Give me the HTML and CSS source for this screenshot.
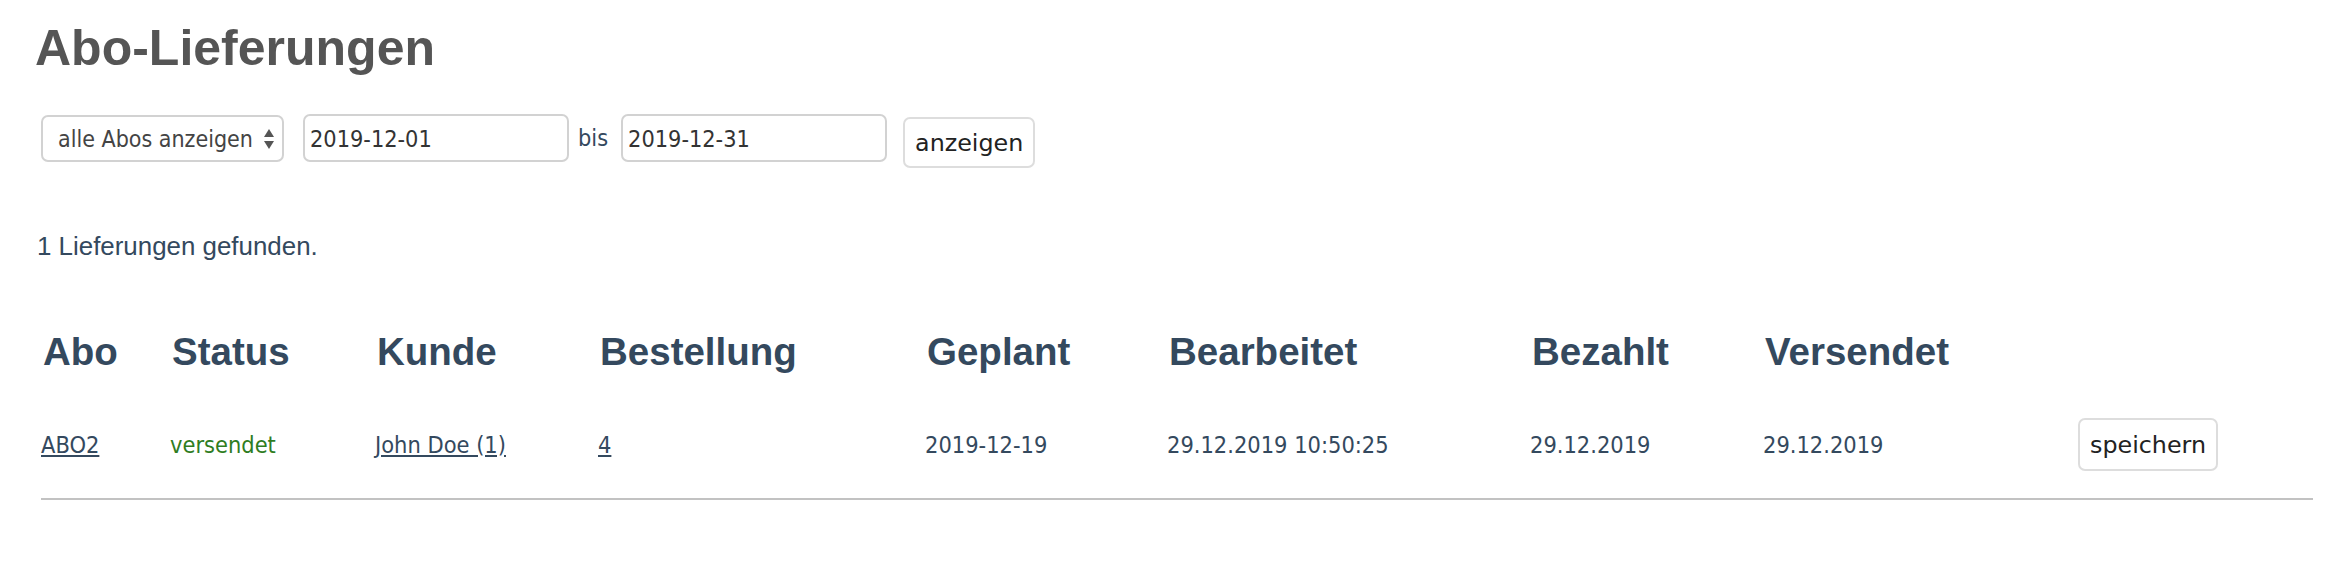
FILE: index.html
```html
<!DOCTYPE html>
<html lang="de">
<head>
<meta charset="utf-8">
<title>Abo-Lieferungen</title>
<link rel="stylesheet" href="styles.css">
</head>
<body>
<div class="page">
  <h1 class="title">Abo-Lieferungen</h1>
  <form class="filter">
    <span class="select-wrap">
      <select class="select">
        <option>alle Abos anzeigen</option>
      </select>
      <svg class="select-arrows" width="12" height="22" viewBox="0 0 12 22" aria-hidden="true">
        <path d="M6 1 L11 9 L1 9 Z" fill="#555"/>
        <path d="M1 13 L11 13 L6 21 Z" fill="#555"/>
      </svg>
    </span>
    <input class="date" type="text" value="2019-12-01">
    <span class="bis">bis</span>
    <input class="date" type="text" value="2019-12-31">
    <button type="button" class="btn btn-show">anzeigen</button>
  </form>
  <p class="count">1 Lieferungen gefunden.</p>
  <table class="deliveries">
    <colgroup>
      <col class="c-abo"><col class="c-status"><col class="c-kunde"><col class="c-best">
      <col class="c-geplant"><col class="c-bearb"><col class="c-bez"><col class="c-vers"><col class="c-act">
    </colgroup>
    <thead>
      <tr>
        <th>Abo</th><th>Status</th><th>Kunde</th><th>Bestellung</th>
        <th>Geplant</th><th>Bearbeitet</th><th>Bezahlt</th><th>Versendet</th><th></th>
      </tr>
    </thead>
    <tbody>
      <tr>
        <td><a href="#">ABO2</a></td>
        <td class="ok">versendet</td>
        <td><a href="#">John Doe (1)</a></td>
        <td><a href="#">4</a></td>
        <td>2019-12-19</td>
        <td>29.12.2019 10:50:25</td>
        <td>29.12.2019</td>
        <td>29.12.2019</td>
        <td><button type="button" class="btn btn-save">speichern</button></td>
      </tr>
    </tbody>
  </table>
</div>
</body>
</html>
```
FILE: styles.css
```css
html, body {
  margin: 0;
  padding: 0;
  background: #ffffff;
}
.page {
  padding: 24px 0 0 35px;
  color: #34495e;
  font-family: "Liberation Sans", Arial, sans-serif;
}
.title {
  margin: 0;
  font-size: 50px;
  line-height: 49px;
  font-weight: bold;
  color: #555555;
}
.filter {
  display: flex;
  align-items: flex-start;
  margin: 41px 0 0 6px;
  height: 54px;
}
.select-wrap {
  position: relative;
  display: block;
  margin-top: 1px;
  margin-right: 19px;
}
.select {
  appearance: none;
  -webkit-appearance: none;
  display: block;
  box-sizing: border-box;
  width: 243px;
  height: 47px;
  margin: 0;
  padding: 0 20px 0 15px;
  border: 2px solid #d2d2d2;
  border-radius: 7px;
  background: #ffffff;
  color: #444444;
  font-family: "DejaVu Sans Condensed", "DejaVu Sans", sans-serif;
  font-stretch: condensed;
  font-size: 23px;
}
.select-arrows {
  position: absolute;
  right: 9px;
  top: 13px;
}
.date {
  box-sizing: border-box;
  width: 266px;
  height: 48px;
  margin: 0;
  padding: 0 0 0 5px;
  border: 2px solid #d2d2d2;
  border-radius: 7px;
  background: #ffffff;
  color: #333333;
  font-family: "DejaVu Sans Condensed", "DejaVu Sans", sans-serif;
  font-stretch: condensed;
  font-size: 23.3px;
  outline: none;
}
.bis {
  margin: 0 13px 0 9px;
  line-height: 48px;
  font-family: "DejaVu Sans Condensed", "DejaVu Sans", sans-serif;
  font-stretch: condensed;
  font-size: 23.3px;
  color: #34495e;
}
.btn {
  box-sizing: border-box;
  margin: 0;
  padding: 0 10px;
  border: 2px solid #dddddd;
  border-radius: 7px;
  background: #ffffff;
  color: #222222;
  font-family: "DejaVu Sans", sans-serif;
  font-size: 23.8px;
}
.btn-show {
  margin-left: 16px;
  margin-top: 3px;
  height: 51px;
}
.btn-save {
  height: 53px;
}
.count {
  margin: 64px 0 0 2px;
  font-size: 25.9px;
  line-height: 28px;
  color: #34495e;
}
.deliveries {
  margin: 69px 0 0 6px;
  width: 2272px;
  table-layout: fixed;
  border-collapse: collapse;
  border-spacing: 0;
}
.c-abo { width: 129px; }
.c-status { width: 205px; }
.c-kunde { width: 223px; }
.c-best { width: 327px; }
.c-geplant { width: 242px; }
.c-bearb { width: 363px; }
.c-bez { width: 233px; }
.c-vers { width: 315px; }
.c-act { width: 235px; }
.deliveries th {
  padding: 0 0 18px 2px;
  text-align: left;
  font-size: 38.5px;
  line-height: 46px;
  font-weight: bold;
  color: #34495e;
  white-space: nowrap;
}
.deliveries td {
  padding: 25px 0 27px;
  vertical-align: middle;
  text-align: left;
  font-family: "DejaVu Sans Condensed", "DejaVu Sans", sans-serif;
  font-stretch: condensed;
  font-size: 23.4px;
  color: #34495e;
  white-space: nowrap;
  border-bottom: 2px solid #c2c2c2;
}
.deliveries td a {
  color: #34495e;
  text-decoration: underline;
}
.deliveries td.ok {
  color: #2f7d1f;
}
```
